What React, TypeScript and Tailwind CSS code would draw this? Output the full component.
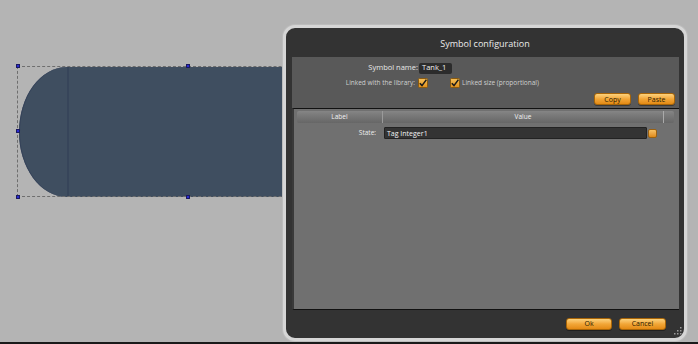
import React from "react";

const font = { fontFamily: '"Open Sans", "Noto Sans", sans-serif' };

function Check() {
  return (
    <svg width="10" height="10" viewBox="0 0 10 10" className="shrink-0">
      <defs>
        <linearGradient id="cbg" x1="0" y1="0" x2="0" y2="1">
          <stop offset="0" stopColor="#f7c25a" />
          <stop offset="1" stopColor="#e08f1a" />
        </linearGradient>
      </defs>
      <rect x="0.5" y="0.5" width="9" height="9" rx="1" fill="url(#cbg)" stroke="#8a5a10" strokeWidth="1" />
      <path d="M1.8 5.2 L4 7.6 L8.4 1.6" fill="none" stroke="#1a1a1a" strokeWidth="1.6" />
    </svg>
  );
}

function OrangeBtn({ label, w }: { label: string; w: string }) {
  return (
    <div
      className={`${w} h-[12px] rounded-[3px] border border-[#a86508] bg-gradient-to-b from-[#fcd27a] via-[#f2a636] to-[#e38a12] flex items-center justify-center text-[7px] text-[#2a1a00] leading-none shadow-[0_1px_0_rgba(0,0,0,0.35)]`}
    >
      {label}
    </div>
  );
}

function Handle({ x, y }: { x: number; y: number }) {
  return (
    <div
      className="absolute w-[4px] h-[4px] bg-[#2b2bd0] border border-[#1a1a60]"
      style={{ left: x - 2, top: y - 2 }}
    />
  );
}

export default function App() {
  return (
    <div className="relative w-[698px] h-[344px] bg-[#b4b4b4] overflow-hidden border-b-2 border-[#1a1a1a]" style={font}>
      {/* Tank shape on canvas */}
      <div className="absolute left-[19px] top-[67px] w-[340px] h-[130px] bg-[#3f4e60] rounded-l-[48px_65px] shadow-[inset_1px_0_0_#36435a]">
        <div className="absolute left-[48px] top-0 bottom-0 w-[2px] bg-[#37455a]" />
      </div>
      {/* selection box */}
      <div className="absolute left-[17px] top-[66px] w-[340px] h-[131px] border border-dashed border-[#6e6e6e]" />
      <Handle x={18} y={66} />
      <Handle x={188} y={66} />
      <Handle x={18} y={131} />
      <Handle x={18} y={197} />
      <Handle x={188} y={197} />

      {/* Dialog */}
      <div className="absolute left-[283px] top-[25px] w-[404px] h-[316px] rounded-[12px] border-[3px] border-[#d6d6d6] bg-[#333333] flex flex-col shadow-[0_0_0_1px_#bdbdbd]">
        <div className="h-[29px] shrink-0 flex items-center justify-center text-[9px] text-[#ececec] pt-[2px]">
          Symbol configuration
        </div>
        <div className="ml-[6px] mr-[5px] flex flex-col">
          {/* upper panel */}
          <div className="h-[51px] bg-[#595959] flex flex-col">
            <div className="flex items-center h-[18px] pt-[4px]">
              <div className="w-[126px] flex justify-end">
                <span className="text-[7.5px] text-[#e8e8e8] leading-none whitespace-nowrap">Symbol name:</span>
              </div>
              <div className="ml-[1px] w-[33px] h-[11px] bg-[#2c2c2c] rounded-[2px] flex items-center px-[3px] text-[7.5px] text-[#f0f0f0] leading-none">
                Tank_1
              </div>
            </div>
            <div className="flex items-center h-[14px] pt-[2px]">
              <div className="w-[123px] flex justify-end">
                <span className="text-[6.5px] text-[#d0d0d0] leading-none whitespace-nowrap">Linked with the library:</span>
              </div>
              <div className="ml-[3px]"><Check /></div>
              <div className="ml-[22px]"><Check /></div>
              <span className="ml-[2px] text-[6.5px] text-[#d0d0d0] leading-none whitespace-nowrap">Linked size (proportional)</span>
            </div>
            <div className="flex justify-end gap-[7px] pr-[4px] mt-[4px]">
              <OrangeBtn label="Copy" w="w-[37px]" />
              <OrangeBtn label="Paste" w="w-[37px]" />
            </div>
          </div>
          {/* table area */}
          <div className="h-[202px] bg-[#707070] border-t border-b border-[#111] border-l-2 border-l-[#3a3a3a] flex flex-col px-[3px] pt-[2px]">
            <div className="h-[12px] flex rounded-[2px] bg-gradient-to-b from-[#858585] to-[#666] text-[6.5px] text-[#f2f2f2] leading-none mr-[2px]">
              <div className="w-[86px] flex items-center justify-center border-r border-[#9a9a9a]">Label</div>
              <div className="w-[281px] flex items-center justify-center border-r border-[#aaa]">Value</div>
              <div className="flex-1" />
            </div>
            <div className="flex items-center h-[12px] mt-[4px]">
              <div className="w-[86px] text-right pr-[7px] text-[6.5px] text-[#ececec] leading-none">State:</div>
              <div className="ml-[1px] w-[263px] h-[12px] bg-[#333] border border-[#222] rounded-[1px] flex items-center px-[2px] text-[7px] text-[#f4f4f4] leading-none">
                Tag Integer1
              </div>
              <div className="ml-[1px] w-[9px] h-[9px] rounded-[2px] bg-gradient-to-b from-[#f7c060] to-[#de8a15] border border-[#9a6010]" />
            </div>
          </div>
        </div>
        {/* footer */}
        <div className="relative flex-1 flex items-center justify-end gap-[7px] pr-[18px] pb-[1px]">
          <OrangeBtn label="Ok" w="w-[46px]" />
          <OrangeBtn label="Cancel" w="w-[47px]" />
          <svg className="absolute right-[2px] bottom-[3px]" width="8" height="8" viewBox="0 0 8 8">
            <rect x="6" y="0" width="1.5" height="1.5" fill="#9a9a9a" />
            <rect x="3" y="3" width="1.5" height="1.5" fill="#9a9a9a" />
            <rect x="6" y="3" width="1.5" height="1.5" fill="#9a9a9a" />
            <rect x="0" y="6" width="1.5" height="1.5" fill="#9a9a9a" />
            <rect x="3" y="6" width="1.5" height="1.5" fill="#9a9a9a" />
            <rect x="6" y="6" width="1.5" height="1.5" fill="#9a9a9a" />
          </svg>
        </div>
      </div>
    </div>
  );
}
